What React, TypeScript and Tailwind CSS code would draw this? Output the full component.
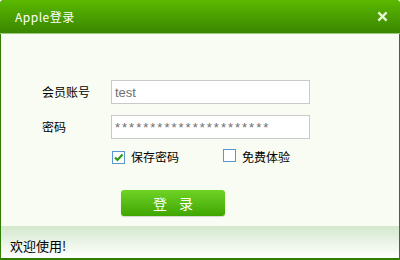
import React from 'react';

const cjk = { fontFamily: '"Noto Sans CJK SC", "Liberation Sans", sans-serif' };

const CheckBox = ({ checked }: { checked?: boolean }) => (
  <span className="relative inline-block w-[13px] h-[13px] border border-[#5a97cf] bg-white">
    {checked && (
      <svg viewBox="0 0 13 13" className="absolute -left-px -top-px w-[13px] h-[13px]">
        <path d="M3 6.5 L5.5 9 L10.5 3.5" fill="none" stroke="#2f9a12" strokeWidth="2.2" />
      </svg>
    )}
  </span>
);

export default function App() {
  return (
    <div className="w-[400px] h-[260px] flex flex-col bg-[#2f7d00] rounded-t-[4px] overflow-hidden text-[12px]" style={cjk}>
      {/* 标题栏 */}
      <div className="h-[34px] flex items-center justify-between pl-[15px] pr-[12px] bg-gradient-to-b from-[#5ab900] to-[#3a8700] border-b border-[#9bc87a] text-white">
        <span className="tracking-[0.5px]">Apple登录</span>
        <svg viewBox="0 0 12 12" className="w-[11px] h-[11px]">
          <path d="M1.5 1.5 L10.5 10.5 M10.5 1.5 L1.5 10.5" stroke="#e6f5d2" strokeWidth="2.6" />
        </svg>
      </div>

      {/* 主体 */}
      <div className="flex-1 mx-[1px] bg-[#f9fcf3] flex flex-col pt-[46px]">
        <div className="flex items-center h-[24px]">
          <span className="w-[68px] pl-[41px] box-content text-black whitespace-nowrap">会员账号</span>
          <input
            readOnly
            defaultValue="test"
            className="ml-[1px] w-[199px] h-[24px] border border-[#c9c9c9] bg-white px-[3px] text-[13px] text-[#707070] outline-none"
            style={{ fontFamily: '"Liberation Sans", sans-serif' }}
          />
        </div>
        <div className="flex items-center h-[24px] mt-[11px]">
          <span className="w-[68px] pl-[41px] box-content text-black">密码</span>
          <input
            readOnly
            defaultValue="**********************"
            className="ml-[1px] w-[199px] h-[24px] border border-[#c9c9c9] bg-white px-[3px] text-[13px] tracking-[2px] text-[#707070] outline-none"
            style={{ fontFamily: '"Liberation Sans", sans-serif' }}
          />
        </div>
        <div className="flex items-center mt-[10px] pl-[111px] h-[16px]">
          <CheckBox checked />
          <span className="ml-[6px] text-black">保存密码</span>
          <span className="ml-[44px]"><CheckBox /></span>
          <span className="ml-[6px] text-black">免费体验</span>
        </div>
        <div className="pl-[120px] mt-[25px]">
          <button className="w-[104px] h-[26px] rounded-[3px] bg-gradient-to-b from-[#6fd324] to-[#3fa600] text-white text-[14px] tracking-[12px] pl-[12px] shadow-[0_1px_1px_rgba(0,0,0,0.15)]">
            登录
          </button>
        </div>
      </div>

      {/* 状态栏 */}
      <div className="h-[32px] mx-[1px] mb-[2px] bg-gradient-to-b from-[#d3e8cc] to-[#ffffff] flex items-end pb-[3px] pl-[9px] text-[13px] text-black">
        欢迎使用!
      </div>
    </div>
  );
}
